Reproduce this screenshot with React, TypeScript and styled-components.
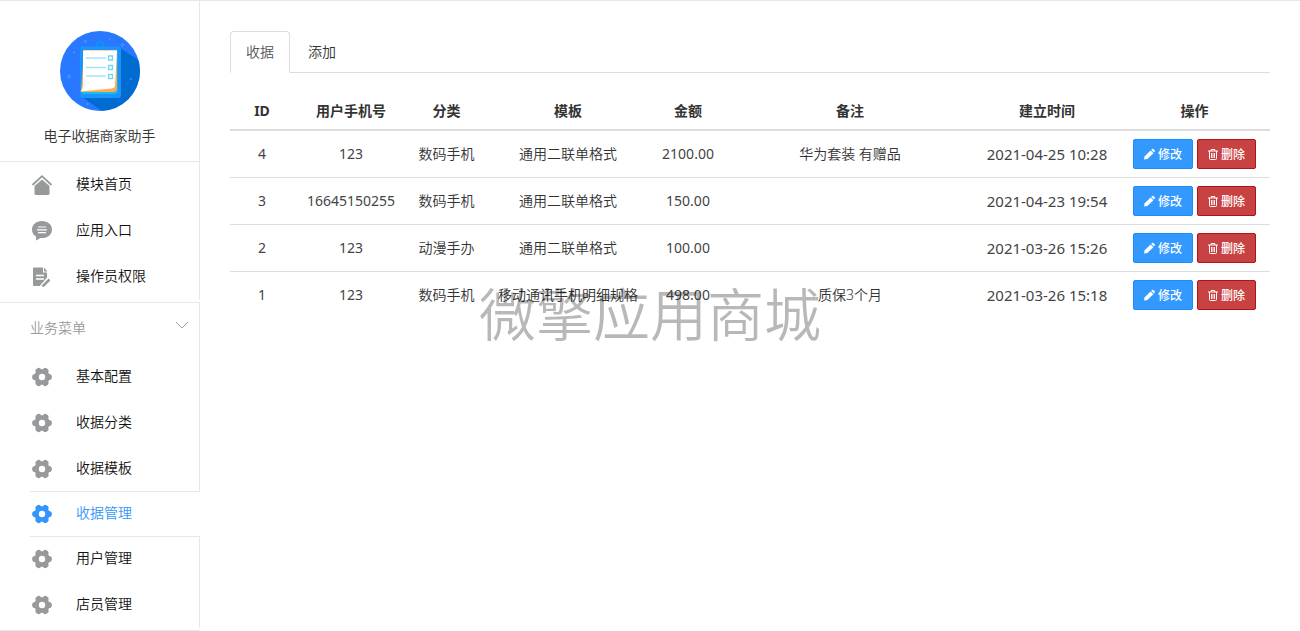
import React from "react";
import styled, { createGlobalStyle } from "styled-components";

const line = "#e7e7eb";

const GlobalStyle = createGlobalStyle`
  * { box-sizing: border-box; }
  body {
    margin: 0;
    background: #fff;
    color: #333;
    font: 350 14px/20px "Noto Sans", "Noto Sans CJK SC", sans-serif;
  }
`;

const Page = styled.div`
  display: flex;
  align-items: flex-start;
  border-top: 1px solid ${line};
`;

const Sidebar = styled.aside`
  flex: 0 0 200px;
  border-bottom: 1px solid ${line};
`;

const Brand = styled.header`
  display: flex;
  flex-direction: column;
  align-items: center;
  gap: 15px;
  height: 161px;
  padding-top: 30px;
  border-right: 1px solid ${line};
  border-bottom: 1px solid ${line};
`;

const MenuGroup = styled.ul`
  list-style: none;
  margin: 0;
  padding: 0 0 2px;
`;

const MenuItem = styled.li<{ $active?: boolean }>`
  height: 46px;
  margin: ${(p) => (p.$active ? "-1px 0 -1px 30px" : "0 0 0 30px")};
  border-style: solid;
  border-color: ${line};
  border-width: ${(p) => (p.$active ? "1px 0" : "0 1px 0 0")};
`;

const MenuLink = styled.a<{ $active?: boolean }>`
  display: flex;
  align-items: center;
  gap: 24px;
  height: ${(p) => (p.$active ? "44px" : "46px")};
  padding-left: 2px;
  color: ${(p) => (p.$active ? "#3296fa" : "#111")};
  text-decoration: none;

  svg {
    flex: none;
    color: ${(p) => (p.$active ? "#3296fa" : "#97999b")};
  }
`;

const MenuLabel = styled.span`
  padding-bottom: 2px;
`;

const SectionToggle = styled.button`
  display: flex;
  justify-content: space-between;
  align-items: center;
  width: 100%;
  height: 52px;
  padding: 0 10px 2px 30px;
  border: solid ${line};
  border-width: 1px 1px 0 0;
  background: none;
  color: #999;
  font: inherit;
  text-align: left;
`;

const Main = styled.main`
  flex: 1;
  min-width: 0;
  padding: 30px;
`;

const Tabs = styled.nav`
  display: flex;
  gap: 2px;
  border-bottom: 1px solid #ddd;
`;

const Tab = styled.a<{ $active?: boolean }>`
  margin-bottom: -1px;
  padding: 10px 15px;
  border: 1px solid ${(p) => (p.$active ? "#ddd" : "transparent")};
  border-bottom-color: ${(p) => (p.$active ? "#fff" : "transparent")};
  border-radius: 4px 4px 0 0;
  color: ${(p) => (p.$active ? "#555" : "#333")};
  text-decoration: none;
`;

const Table = styled.table`
  width: 100%;
  margin-top: 20px;
  border-spacing: 0;
  table-layout: fixed;
  text-align: center;
`;

const HeadCell = styled.th<{ $width?: number }>`
  width: ${(p) => (p.$width ? `${p.$width}px` : "auto")};
  height: 38px;
  padding: 0;
  border-bottom: 2px solid #ddd;
  font-weight: 700;
`;

const Row = styled.tr`
  &:last-child td { border-bottom-color: transparent; }
`;

const Cell = styled.td`
  height: 47px;
  padding: 0;
  border-bottom: 1px solid #ddd;
  white-space: nowrap;
`;

const NumberCell = styled(Cell)`
  font-weight: 400;
  color: #444;
`;

const DateCell = styled(NumberCell)`
  font-size: 15px;
  line-height: 18px;
`;

const Actions = styled.div`
  display: flex;
  justify-content: center;
  gap: 4px;
`;

const ActionButton = styled.button<{ $danger?: boolean }>`
  display: flex;
  align-items: center;
  gap: 3px;
  height: 30px;
  padding: 0 10px;
  border: 1px solid ${(p) => (p.$danger ? "#b31217" : "#1a8cff")};
  border-radius: 2px;
  background: ${(p) => (p.$danger ? "#c94243" : "#3399ff")};
  color: #fff;
  font: 500 12px/18px "Noto Sans CJK SC", sans-serif;
`;

const Watermark = styled.div`
  position: fixed;
  inset: 0;
  display: flex;
  align-items: center;
  justify-content: center;
  padding-bottom: 10px;
  color: rgba(0, 0, 0, 0.28);
  font: 350 57px/60px "Noto Sans CJK SC", sans-serif;
  pointer-events: none;
`;

function Logo() {
  return (
    <svg width="80" height="80" viewBox="0 0 80 80" aria-hidden="true">
      <defs>
        <clipPath id="disc"><circle cx="40" cy="40" r="40" /></clipPath>
      </defs>
      <g clipPath="url(#disc)">
        <rect width="80" height="80" fill="#2879ff" />
        <path d="M60 17L80 30V80H42L22 66Z" fill="#006bd1" />
        <g fill="none" stroke="#5c99ff" strokeWidth="1">
          <circle cx="25.500" cy="10.500" r="1" />
          <circle cx="62.500" cy="14" r="1.300" />
          <circle cx="14" cy="21.500" r=".6" />
          <circle cx="9" cy="45.500" r="1.300" />
          <circle cx="50" cy="8" r=".4" />
          <circle cx="71" cy="48" r=".5" />
          <circle cx="27.500" cy="73" r=".8" />
        </g>
        <rect x="36.500" y="11.500" width="7" height="6" rx="2" fill="none" stroke="#148ff5" strokeWidth="2.500" />
        <rect x="20" y="15.500" width="41" height="51.500" rx="3" fill="#1b95fc" />
        <path d="M24 20H57.500V60Q57.500 63 54 63H22Z" fill="#16bdf2" />
        <path d="M24 19H57V57Q57 61 53 61H21Z" fill="#ffac50" />
        <path d="M23 19.500H57L55 55Q54.500 57 52 57.500L20.500 60.500Q23 58 23 54Z" fill="#fff" />
        <g stroke="#a4e5fa" strokeWidth="1.300">
          <path d="M26 27H46M26 36.500H46M26 45H46" />
          <path d="M48.500 25H52.500V29H48.500ZM48.500 34.500H52.500V38.500H48.500ZM48.500 43.500H52.500V47.500H48.500Z" fill="none" stroke="#70d8f3" />
        </g>
      </g>
    </svg>
  );
}

function HomeIcon() {
  return (
    <svg width="20" height="20" viewBox="0 0 20 20" aria-hidden="true">
      <path d="M1 9.500L10 1.200L19 9.500" fill="none" stroke="currentColor" strokeWidth="1.800" strokeLinecap="round" strokeLinejoin="round" />
      <path d="M10 4.400L17.500 11V18.500Q17.500 20 16 20H4Q2.500 20 2.500 18.500V11Z" fill="currentColor" />
    </svg>
  );
}

function ChatIcon() {
  return (
    <svg width="20" height="20" viewBox="0 0 20 20" aria-hidden="true">
      <path d="M10 0C4.500 0 0 3.500 0 8.500C0 11.800 1.500 14.100 4 15.500V19.500L8.500 17C15 17.500 20 14 20 8.500C20 3.500 15.500 0 10 0Z" fill="currentColor" />
      <path d="M6 6H14M5 8.800H15M6 11.600H14" stroke="#fff" strokeWidth="1.200" />
    </svg>
  );
}

function DocumentIcon() {
  return (
    <svg width="20" height="20" viewBox="0 0 20 20" aria-hidden="true">
      <path d="M2 .5H11V5.500H15V10.500L8 19H2Q1 19 1 18V1.500Q1 .5 2 .5Z" fill="currentColor" />
      <path d="M12 .5L15.500 4.500H12Z" fill="currentColor" />
      <path d="M4 8.500H12M4 12H12" stroke="#fff" strokeWidth="1.300" />
      <path d="M10 19.500L17.500 12" stroke="#fff" strokeWidth="4.500" />
      <path d="M10.500 19.500L17.500 12.500" stroke="currentColor" strokeWidth="2.500" />
    </svg>
  );
}

function GearIcon() {
  return (
    <svg width="20" height="20" viewBox="0 0 20 20" aria-hidden="true">
      <path
        d="M3.200 10H16.800M6.600 4.100L13.400 15.900M13.400 4.100L6.600 15.900"
        stroke="currentColor"
        strokeWidth="6.200"
        strokeLinecap="round"
      />
      <circle cx="10" cy="10" r="7.800" fill="currentColor" />
      <circle cx="10" cy="10" r="3.200" fill="#fff" />
    </svg>
  );
}

function ChevronIcon() {
  return (
    <svg width="14" height="14" viewBox="0 0 14 14" fill="none" stroke="#a0a0a0" aria-hidden="true">
      <path d="M1 1L7 7L13 1" />
    </svg>
  );
}

function PencilIcon() {
  return (
    <svg width="11" height="12" viewBox="0 0 11 12" fill="currentColor" aria-hidden="true">
      <path d="M0 11.500L.7 8.300L6.600 2.400L9.400 5.200L3.400 11Z" />
      <path d="M7.200 1.800L8.200 .9Q8.800 .4 9.400 .9L10.700 2.300Q11.200 2.900 10.700 3.500L9.900 4.500Z" />
    </svg>
  );
}

function TrashIcon() {
  return (
    <svg width="10" height="12" viewBox="0 0 10 12" fill="none" stroke="currentColor" aria-hidden="true">
      <path d="M0 3H10M3.200 3V1.500H6.800V3M1.500 3V10.500Q1.500 11.500 2.500 11.500H7.500Q8.500 11.500 8.500 10.500V3" />
      <path d="M3.500 5V10M5 5V10M6.500 5V10" strokeWidth=".9" />
    </svg>
  );
}

const topMenu = [
  { label: "模块首页", Icon: HomeIcon },
  { label: "应用入口", Icon: ChatIcon },
  { label: "操作员权限", Icon: DocumentIcon },
];

const businessMenu = ["基本配置", "收据分类", "收据模板", "收据管理", "用户管理", "店员管理"];

const columns: { label: string; width?: number }[] = [
  { label: "ID", width: 64 },
  { label: "用户手机号", width: 114 },
  { label: "分类", width: 77 },
  { label: "模板", width: 166 },
  { label: "金额", width: 74 },
  { label: "备注" },
  { label: "建立时间", width: 144 },
  { label: "操作", width: 151 },
];

const receipts = [
  { id: 4, phone: "123", kind: "数码手机", template: "通用二联单格式", amount: "2100.00", note: "华为套装 有赠品", time: "2021-04-25 10:28" },
  { id: 3, phone: "16645150255", kind: "数码手机", template: "通用二联单格式", amount: "150.00", note: "", time: "2021-04-23 19:54" },
  { id: 2, phone: "123", kind: "动漫手办", template: "通用二联单格式", amount: "100.00", note: "", time: "2021-03-26 15:26" },
  { id: 1, phone: "123", kind: "数码手机", template: "移动通讯手机明细规格", amount: "498.00", note: "质保3个月", time: "2021-03-26 15:18" },
];

export default function App() {
  return (
    <>
      <GlobalStyle />
      <Page>
        <Sidebar>
          <Brand>
            <Logo />
            <span>电子收据商家助手</span>
          </Brand>
          <MenuGroup>
            {topMenu.map(({ label, Icon }) => (
              <MenuItem key={label}>
                <MenuLink href="#"><Icon /><MenuLabel>{label}</MenuLabel></MenuLink>
              </MenuItem>
            ))}
          </MenuGroup>
          <SectionToggle type="button" aria-expanded="true">
            业务菜单
            <ChevronIcon />
          </SectionToggle>
          <MenuGroup>
            {businessMenu.map((label) => {
              const active = label === "收据管理";
              return (
                <MenuItem key={label} $active={active}>
                  <MenuLink href="#" $active={active}><GearIcon /><MenuLabel>{label}</MenuLabel></MenuLink>
                </MenuItem>
              );
            })}
          </MenuGroup>
        </Sidebar>
        <Main>
          <Tabs>
            <Tab href="#" $active>收据</Tab>
            <Tab href="#">添加</Tab>
          </Tabs>
          <Table>
            <thead>
              <tr>
                {columns.map((c) => (
                  <HeadCell key={c.label} $width={c.width} scope="col">{c.label}</HeadCell>
                ))}
              </tr>
            </thead>
            <tbody>
              {receipts.map((r) => (
                <Row key={r.id}>
                  <NumberCell>{r.id}</NumberCell>
                  <NumberCell>{r.phone}</NumberCell>
                  <Cell>{r.kind}</Cell>
                  <Cell>{r.template}</Cell>
                  <NumberCell>{r.amount}</NumberCell>
                  <Cell>{r.note}</Cell>
                  <DateCell>{r.time}</DateCell>
                  <Cell>
                    <Actions>
                      <ActionButton type="button"><PencilIcon />修改</ActionButton>
                      <ActionButton type="button" $danger><TrashIcon />删除</ActionButton>
                    </Actions>
                  </Cell>
                </Row>
              ))}
            </tbody>
          </Table>
        </Main>
      </Page>
      <Watermark>微擎应用商城</Watermark>
    </>
  );
}
